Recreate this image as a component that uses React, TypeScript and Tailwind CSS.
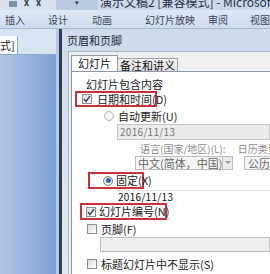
import React from "react";

const F = { fontFamily: '"Noto Sans CJK SC", "Noto Sans", sans-serif' };

function Check({ checked }: { checked?: boolean }) {
  return (
    <div className="w-[10px] h-[10px] border border-[#8e8f8f] bg-[#eeeeee] bg-linear-to-br from-[#dcdcdc] to-[#ffffff] flex items-center justify-center shrink-0">
      {checked && (
        <svg width="8" height="8" viewBox="0 0 8 8">
          <path d="M1 4 L3 6.5 L7 1" stroke="#3a4a66" strokeWidth="1.4" fill="none" />
        </svg>
      )}
    </div>
  );
}

function Radio({ on, disabled }: { on?: boolean; disabled?: boolean }) {
  return (
    <div
      className={
        "w-[10px] h-[10px] rounded-full border flex items-center justify-center shrink-0 " +
        (disabled ? "border-[#b8b8b8] bg-[#f2f2f2]" : "border-[#7a7d83] bg-[#eeeeee] bg-linear-to-br from-[#d8d8d8] to-white")
      }
    >
      {on && <div className="w-[5px] h-[5px] rounded-full bg-[#2a66b5]" />}
    </div>
  );
}

export default function App() {
  return (
    <div className="w-[270px] h-[274px] overflow-hidden flex flex-col bg-white text-[11px] leading-none" style={F}>
      {/* title bar */}
      <div className="h-[10px] shrink-0 flex bg-[#cdd9e8] overflow-hidden">
        <div className="w-[56px] shrink-0 h-full bg-[#d9e2ee] flex items-start gap-[7px] pl-[9px]">
          <div className="w-[8px] h-[6px] bg-[#7f93ad] mt-[1px] shrink-0" />
          <div className="text-[9px] text-[#2b3448] -mt-[2px] font-bold">x</div>
          <div className="text-[9px] text-[#2b3448] -mt-[2px] font-bold">x</div>
        </div>
        <div className="w-[42px] shrink-0 h-full bg-[#b9cbe2] flex justify-center">
          <div className="text-[7px] text-[#2b3448] -mt-[1px]">▾</div>
        </div>
        <div className="shrink-0 text-[12px] text-[#1f324d] -mt-[4px] whitespace-nowrap pl-[2px]">演示文稿2 [兼容模式] - Microsoft PowerPoint</div>
      </div>
      {/* ribbon tabs */}
      <div className="h-[19px] shrink-0 flex items-center pt-[2px] bg-[#d6e3f4] bg-linear-to-b from-[#dfe9f6] to-[#cedcf0] text-[#3a4556] text-[10px] whitespace-nowrap border-b border-[#a7bbd6]">
        <span className="ml-[5px] shrink-0">插入</span>
        <span className="ml-[23px] shrink-0">设计</span>
        <span className="ml-[24px] shrink-0">动画</span>
        <span className="ml-[33px] shrink-0">幻灯片放映</span>
        <span className="ml-[13px] shrink-0">审阅</span>
        <span className="ml-[22px] shrink-0">视图</span>
      </div>
      {/* main */}
      <div className="h-[245px] shrink-0 flex">
        {/* left panel */}
        <div className="w-[59px] h-[245px] shrink-0 bg-[#94b2dd] bg-linear-to-r from-[#afc5e6] via-[#98b5df] to-[#7a9fd5] border-r-[3px] border-[#b3c9e8]">
          <div className="h-[26px] bg-[#d9e4f3] flex items-end border-b border-[#8fa6c4]">
            <div className="w-[18px] h-[18px] bg-white border-r border-[#8fa6c4] flex items-center text-[11px] text-[#222]">式]</div>
          </div>
        </div>
        {/* dialog */}
        <div className="flex-1 flex flex-col border-l-[3px] border-[#323d4c] bg-[#d6e1ef] bg-linear-to-b from-[#cfdbec] to-[#e1e9f4] min-w-0">
          <div className="h-[22px] shrink-0 flex items-center pl-[5px] text-[11px] text-[#1b2738]">页眉和页脚</div>
          <div className="flex-1 ml-[6px] bg-[#f0f0f0] border-l border-t border-[#a9b6c6] flex flex-col pt-[4px] pl-[2px] min-w-0">
            {/* tabs */}
            <div className="h-[15px] flex items-end shrink-0">
              <div className="h-[16px] px-[6px] bg-white border border-b-0 border-[#8d99a8] flex items-center text-[#111]">幻灯片</div>
              <div className="h-[13px] px-[2px] bg-[#ebebeb] bg-linear-to-b from-[#f5f5f5] to-[#e2e2e2] border border-l-0 border-b-0 border-[#9aa3ad] flex items-center text-[#111]">备注和讲义</div>
            </div>
            {/* panel */}
            <div className="flex-1 bg-white border-l border-t border-[#8d99a8] flex flex-col text-[#1a1a1a] whitespace-nowrap">
              <div className="mt-[6px] h-[12px] pl-[14px] flex items-center">幻灯片包含内容</div>
              <div className="mt-[1px] h-[16px] ml-[3px] w-[82px] border-2 border-[#c9313f] flex items-center pl-[5px] gap-[5px]">
                <Check checked />
                <span>日期和时间(D)</span>
              </div>
              <div className="mt-[2px] h-[14px] pl-[32px] flex items-center gap-[4px]">
                <Radio disabled />
                <span className="text-[#222]">自动更新(U)</span>
              </div>
              <div className="mt-[1px] h-[16px] ml-[45px] bg-[#ececec] border border-[#c4c4c4] flex items-center pl-[2px] text-[#777] text-[10px] tracking-[0.3px]">
                2016/11/13
              </div>
              <div className="mt-[3px] h-[12px] pl-[68px] flex items-center text-[#8c8c8c] text-[10px]">
                <span>语言(国家/地区)(L):</span>
                <span className="ml-[12px]">日历类型</span>
              </div>
              <div className="mt-[1px] h-[14px] flex items-center pl-[63px]">
                <div className="w-[98px] shrink-0 h-[14px] border border-[#bdbdbd] bg-[#f6f6f6] flex items-center">
                  <span className="pl-[2px] flex-1 text-[#666]">中文(简体，中国)</span>
                  <div className="w-[12px] h-full border-l border-[#c8c8c8] bg-[#eaeaea] flex items-center justify-center">
                    <svg width="6" height="4" viewBox="0 0 6 4"><path d="M0 0 L6 0 L3 3 Z" fill="#999" /></svg>
                  </div>
                </div>
                <div className="ml-[11px] flex-1 h-[14px] border border-[#bdbdbd] bg-[#f6f6f6] flex items-center pl-[3px] text-[#666]">公历</div>
              </div>
              <div className="mt-[2px] h-[17px] ml-[16px] w-[56px] border-2 border-[#c9313f] flex items-center pl-[13px] gap-[3px]">
                <Radio on />
                <span>固定(X)</span>
              </div>
              <div className="mt-[1px] h-[13px] ml-[44px] flex items-center text-[10px] text-[#111] tracking-[0.3px] border-t border-[#e2e2e2] pl-[2px]">
                2016/11/13
              </div>
              <div className="h-[17px] ml-[8px] w-[87px] border-2 border-[#c9313f] flex items-center pl-[4px] gap-[3px]">
                <Check checked />
                <span>幻灯片编号(N)</span>
              </div>
              <div className="mt-[3px] h-[12px] pl-[15px] flex items-center gap-[4px]">
                <Check />
                <span>页脚(F)</span>
              </div>
              <div className="mt-[2px] h-[15px] ml-[28px] bg-[#eeeeee] border border-[#bfbfbf]" />
              <div className="mt-[6px] h-[12px] pl-[15px] flex items-center gap-[4px]">
                <Check />
                <span>标题幻灯片中不显示(S)</span>
              </div>
            </div>
          </div>
        </div>
      </div>
    </div>
  );
}
